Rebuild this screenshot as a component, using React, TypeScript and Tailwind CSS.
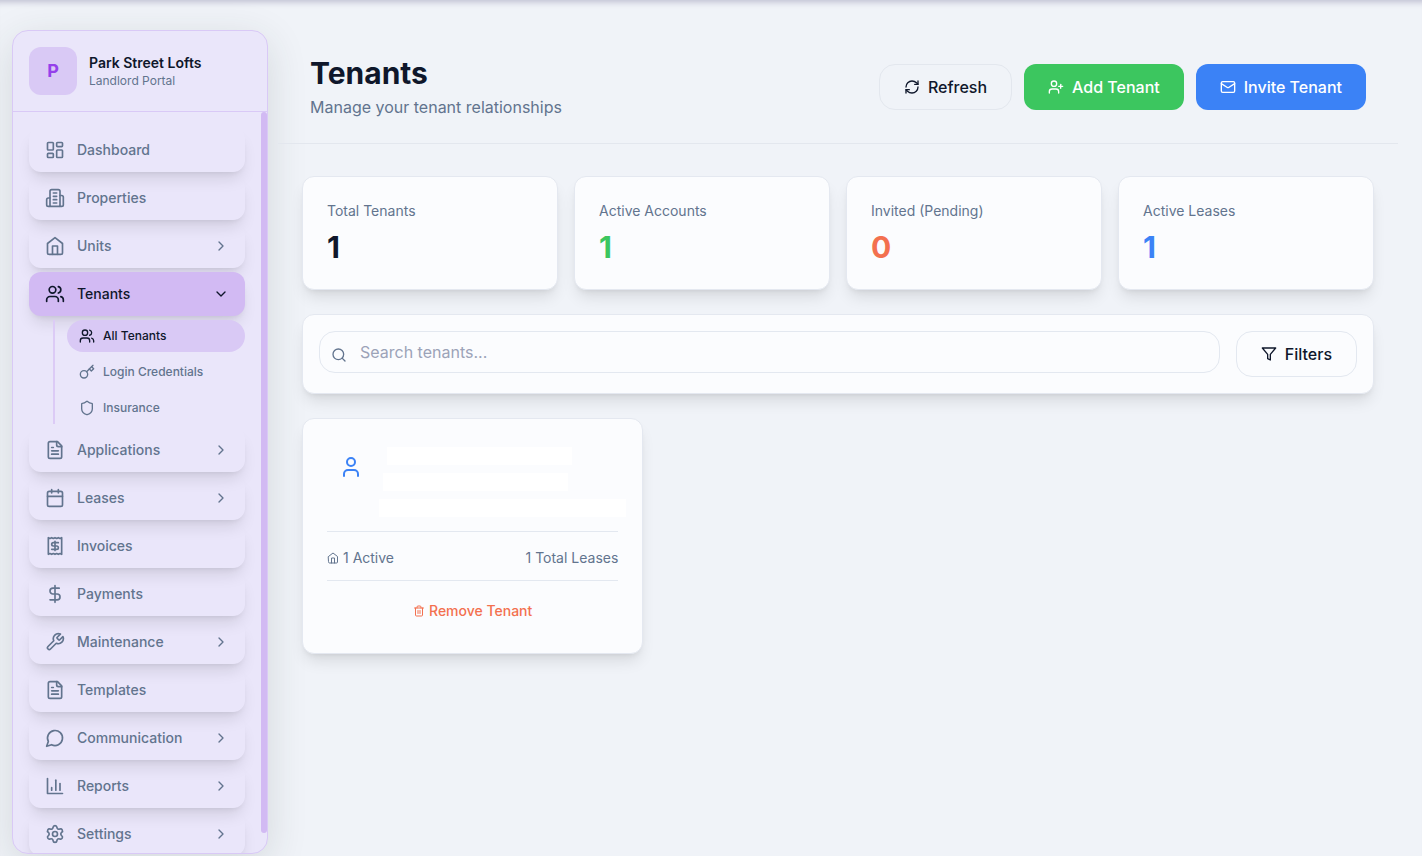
import type { ReactNode } from "react";
import {
  Calendar,
  ChevronDown,
  ChevronRight,
  DollarSign,
  LayoutDashboard,
  Mail,
  RefreshCw,
  Search,
  Settings,
  Shield,
  User,
  UserPlus,
  Users,
} from "lucide-react";

type IconProps = { className?: string };

function Glyph({ className, children }: IconProps & { children: ReactNode }) {
  return (
    <svg
      viewBox="0 0 24 24"
      fill="none"
      stroke="currentColor"
      strokeWidth="2"
      strokeLinecap="round"
      strokeLinejoin="round"
      className={className}
      aria-hidden="true"
    >
      {children}
    </svg>
  );
}

const HomeIcon = ({ className }: IconProps) => (
  <Glyph className={className}>
    <path d="m3 9 9-7 9 7v11a2 2 0 0 1-2 2H5a2 2 0 0 1-2-2z" />
    <path d="M9 22V12h6v10" />
  </Glyph>
);

const BuildingIcon = ({ className }: IconProps) => (
  <Glyph className={className}>
    <path d="M6 22V4a2 2 0 0 1 2-2h8a2 2 0 0 1 2 2v18Z" />
    <path d="M6 12H4a2 2 0 0 0-2 2v6a2 2 0 0 0 2 2h2" />
    <path d="M18 9h2a2 2 0 0 1 2 2v9a2 2 0 0 1-2 2h-2" />
    <path d="M10 6h4" />
    <path d="M10 10h4" />
    <path d="M10 14h4" />
    <path d="M10 18h4" />
  </Glyph>
);

const KeyIcon = ({ className }: IconProps) => (
  <Glyph className={className}>
    <circle cx="7.5" cy="15.5" r="5.5" />
    <path d="m21 2-9.6 9.6" />
    <path d="m15.5 7.5 3 3L22 7l-3-3" />
  </Glyph>
);

const FileIcon = ({ className }: IconProps) => (
  <Glyph className={className}>
    <path d="M15 2H6a2 2 0 0 0-2 2v16a2 2 0 0 0 2 2h12a2 2 0 0 0 2-2V7Z" />
    <path d="M14 2v4a2 2 0 0 0 2 2h4" />
    <path d="M10 9H8" />
    <path d="M16 13H8" />
    <path d="M16 17H8" />
  </Glyph>
);

const ReceiptIcon = ({ className }: IconProps) => (
  <Glyph className={className}>
    <path d="M4 2v20l2-1 2 1 2-1 2 1 2-1 2 1 2-1 2 1V2l-2 1-2-1-2 1-2-1-2 1-2-1-2 1Z" />
    <path d="M16 8h-6a2 2 0 1 0 0 4h4a2 2 0 1 1 0 4H8" />
    <path d="M12 17.5v-11" />
  </Glyph>
);

const WrenchIcon = ({ className }: IconProps) => (
  <Glyph className={className}>
    <path d="M14.7 6.3a1 1 0 0 0 0 1.4l1.6 1.6a1 1 0 0 0 1.4 0l3.77-3.77a6 6 0 0 1-7.94 7.94l-6.91 6.91a2.12 2.12 0 0 1-3-3l6.91-6.91a6 6 0 0 1 7.94-7.94l-3.76 3.76z" />
  </Glyph>
);

const ChatIcon = ({ className }: IconProps) => (
  <Glyph className={className}>
    <path d="M7.9 20A9 9 0 1 0 4 16.1L2 22Z" />
  </Glyph>
);

const ChartIcon = ({ className }: IconProps) => (
  <Glyph className={className}>
    <path d="M3 3v18h18" />
    <path d="M18 17V9" />
    <path d="M13 17V5" />
    <path d="M8 17v-3" />
  </Glyph>
);

const FilterIcon = ({ className }: IconProps) => (
  <Glyph className={className}>
    <path d="M22 3H2l8 9.46V19l4 2v-8.54L22 3z" />
  </Glyph>
);

const TrashIcon = ({ className }: IconProps) => (
  <Glyph className={className}>
    <path d="M3 6h18" />
    <path d="M19 6v14a2 2 0 0 1-2 2H7a2 2 0 0 1-2-2V6" />
    <path d="M8 6V4a2 2 0 0 1 2-2h4a2 2 0 0 1 2 2v2" />
    <path d="M10 11v6" />
    <path d="M14 11v6" />
  </Glyph>
);

const navItems = [
  { label: "Dashboard", icon: LayoutDashboard },
  { label: "Properties", icon: BuildingIcon },
  { label: "Units", icon: HomeIcon, expandable: true },
  { label: "Tenants", icon: Users, expandable: true, active: true },
  { label: "Applications", icon: FileIcon, expandable: true },
  { label: "Leases", icon: Calendar, expandable: true },
  { label: "Invoices", icon: ReceiptIcon },
  { label: "Payments", icon: DollarSign },
  { label: "Maintenance", icon: WrenchIcon, expandable: true },
  { label: "Templates", icon: FileIcon },
  { label: "Communication", icon: ChatIcon, expandable: true },
  { label: "Reports", icon: ChartIcon, expandable: true },
  { label: "Settings", icon: Settings, expandable: true },
];

const tenantLinks = [
  { label: "All Tenants", icon: Users, active: true },
  { label: "Login Credentials", icon: KeyIcon },
  { label: "Insurance", icon: Shield },
];

const stats = [
  { label: "Total Tenants", value: 1, color: "text-slate-900" },
  { label: "Active Accounts", value: 1, color: "text-[#3cc65f]" },
  { label: "Invited (Pending)", value: 0, color: "text-[#f3704f]" },
  { label: "Active Leases", value: 1, color: "text-[#3b82f6]" },
];

const card = "rounded-xl border border-[#e4e8f0] bg-[#fbfcfe] shadow-lg";

function SubMenu() {
  return (
    <ul className="ml-6 flex flex-col gap-1 border-l-2 border-[#dccbf6] pl-3">
      {tenantLinks.map(({ label, icon: Icon, active }) => (
        <li key={label}>
          <a
            href="#"
            className={`flex h-8 items-center gap-2 rounded-2xl px-3 text-xs font-medium ${
              active ? "bg-[#d9c9f5] text-slate-900" : "text-slate-500"
            }`}
          >
            <Icon className="size-4" />
            {label}
          </a>
        </li>
      ))}
    </ul>
  );
}

function Sidebar() {
  return (
    <aside className="flex w-64 shrink-0 flex-col overflow-hidden rounded-2xl border border-[#d9c9f6] bg-[#eae6fa] shadow-[0_10px_40px_rgba(40,60,50,0.14)]">
      <div className="flex items-center gap-3 border-b border-[#d9c9f6] p-4">
        <div className="flex size-12 items-center justify-center rounded-xl bg-[#d9c9f5] text-lg font-bold text-[#9540ea]">
          P
        </div>
        <div>
          <p className="text-sm font-semibold text-slate-900">Park Street Lofts</p>
          <p className="text-xs text-slate-500">Landlord Portal</p>
        </div>
      </div>

      <div className="flex min-h-0 flex-1">
        <nav className="min-w-0 flex-1 overflow-hidden p-4">
          <ul className="flex flex-col gap-1">
            {navItems.map(({ label, icon: Icon, expandable, active }) => (
              <li key={label} className="flex flex-col gap-1">
                <button
                  className={`flex h-11 w-full items-center gap-3 rounded-xl px-4 text-left text-sm font-medium shadow-lg ${
                    active ? "bg-[#d2baf3] text-slate-900" : "text-slate-500"
                  }`}
                >
                  <Icon className="size-5" />
                  <span className="flex-1">{label}</span>
                  {expandable &&
                    (active ? <ChevronDown className="size-4" /> : <ChevronRight className="size-4" />)}
                </button>
                {active && <SubMenu />}
              </li>
            ))}
          </ul>
        </nav>
        <div className="mb-5 w-1.5 shrink-0 rounded-full bg-[#d2baf3]" />
      </div>
    </aside>
  );
}

function Header() {
  return (
    <header className="flex items-center justify-between border-b border-[#e3e7ee] px-8 pt-[25px] pb-6">
      <div>
        <h1 className="text-3xl leading-9 font-bold text-slate-900">Tenants</h1>
        <p className="mt-1 text-base text-slate-500">Manage your tenant relationships</p>
      </div>
      <div className="flex gap-3 font-medium">
        <button className="flex h-[46px] items-center gap-2 rounded-2xl border border-[#e3e7ee] px-6 text-slate-900">
          <RefreshCw className="size-4" />
          Refresh
        </button>
        <button className="flex h-[46px] items-center gap-2 rounded-xl bg-[#3cc65f] px-6 text-white">
          <UserPlus className="size-4" />
          Add Tenant
        </button>
        <button className="flex h-[46px] items-center gap-2 rounded-xl bg-[#3b82f6] px-6 text-white">
          <Mail className="size-4" />
          Invite Tenant
        </button>
      </div>
    </header>
  );
}

function TenantCard() {
  return (
    <article className={`${card} p-6`}>
      <div className="flex h-[88px] gap-1">
        <div className="flex size-12 shrink-0 items-center justify-center">
          <User className="size-6 text-[#3b82f6]" />
        </div>
        <div className="-mr-2 flex flex-1 flex-col gap-2 pt-1">
          <div className="ml-2 h-[18px] w-3/4 bg-white" />
          <div className="ml-1 h-[18px] w-3/4 bg-white" />
          <div className="h-[18px] bg-white" />
        </div>
      </div>
      <div className="flex items-center justify-between border-y border-[#e3e8f0] pt-4 pb-3 text-sm text-slate-500">
        <span className="flex items-center gap-1">
          <HomeIcon className="size-3" />
          1 Active
        </span>
        <span>1 Total Leases</span>
      </div>
      <button className="mt-3 flex h-9 w-full items-center justify-center gap-1 text-sm font-medium text-[#f3704f]">
        <TrashIcon className="size-3" />
        Remove Tenant
      </button>
    </article>
  );
}

export default function App() {
  return (
    <div className="flex h-screen overflow-hidden bg-[#f0f3f8] font-['Inter',sans-serif] shadow-[inset_0_8px_6px_-6px_rgba(40,30,90,0.25)]">
      <div className="flex shrink-0 pt-[30px] pb-0.5 pl-3">
        <Sidebar />
      </div>

      <main className="min-w-0 flex-1 pt-[30px] pr-6 pl-2.5">
        <Header />

        <div className="flex flex-col gap-6 px-6 pt-8">
          <section className="grid grid-cols-4 gap-4">
            {stats.map(({ label, value, color }) => (
              <div key={label} className={`${card} p-6`}>
                <p className="text-sm text-slate-500">{label}</p>
                <p className={`mt-2 text-3xl leading-9 font-bold ${color}`}>{value}</p>
              </div>
            ))}
          </section>

          <section className={`${card} flex items-start gap-4 p-4`}>
            <div className="relative flex-1">
              <Search className="absolute top-4 left-3 size-4 text-slate-500" />
              <input
                type="text"
                aria-label="Search tenants"
                placeholder="Search tenants..."
                className="h-[42px] w-full rounded-2xl border border-[#e3e8f0] bg-transparent pr-4 pl-10 text-base text-slate-900 outline-none placeholder:text-[#9ca3b8]"
              />
            </div>
            <button className="flex h-[46px] items-center gap-2 rounded-2xl border border-[#e3e8f0] px-6 font-medium text-slate-900">
              <FilterIcon className="size-4" />
              Filters
            </button>
          </section>

          <section className="grid grid-cols-3 gap-6">
            <TenantCard />
          </section>
        </div>
      </main>
    </div>
  );
}
